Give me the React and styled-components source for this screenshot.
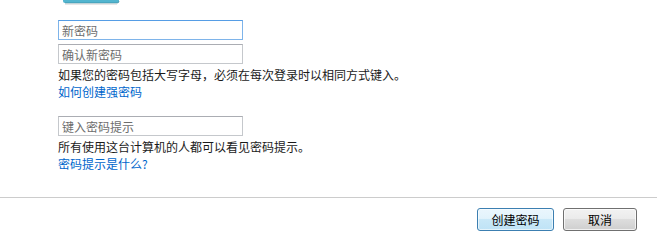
import React from "react";
import styled, { createGlobalStyle } from "styled-components";

const GlobalStyle = createGlobalStyle`
  html, body {
    margin: 0;
    padding: 0;
    background: #ffffff;
  }
  body {
    font-family: "Microsoft YaHei", "Noto Sans CJK SC", "Noto Sans", sans-serif;
    font-size: 12px;
    color: #000000;
  }
`;

const Page = styled.div`
  width: 657px;
  height: 240px;
  display: flex;
  flex-direction: column;
  overflow: hidden;
`;

const Content = styled.div`
  display: flex;
  flex-direction: column;
  align-items: flex-start;
  padding-left: 58px;
  flex: 1;
`;

const Picture = styled.div`
  height: 4px;
  margin-left: 4px;
  margin-bottom: 16px;
  line-height: 0;
`;

const Field = styled.input`
  box-sizing: border-box;
  width: 185px;
  height: 20px;
  margin: 0 0 ${(p) => p.$gap}px 0;
  padding: 0 3px;
  border: 1px solid ${(p) => (p.$focused ? "#7eb4ea" : "#c5c8cc")};
  border-top-color: ${(p) => (p.$focused ? "#569de5" : "#abadb3")};
  border-radius: 0;
  outline: none;
  background: #ffffff;
  font-family: inherit;
  font-size: 12px;
  color: #000000;

  &::placeholder {
    color: #6d6d6d;
    opacity: 1;
  }
`;

const Note = styled.div`
  line-height: 17px;
  margin-top: 2px;
  white-space: nowrap;
  color: #1a1a1a;
`;

const Link = styled.a`
  line-height: 17px;
  color: #0066cc;
  text-decoration: none;
  cursor: pointer;
  margin-bottom: ${(p) => p.$gap || 0}px;
`;

const Footer = styled.div`
  height: 43px;
  border-top: 1px solid #cccccc;
  display: flex;
  justify-content: flex-end;
  align-items: flex-start;
  gap: 9px;
  padding: 10px 20px 0 0;
  box-sizing: border-box;
`;

const Button = styled.button`
  box-sizing: border-box;
  width: ${(p) => p.$width}px;
  height: 23px;
  padding: 0;
  border-radius: 3px;
  font-family: inherit;
  font-size: 12px;
  color: #000000;
  border: 1px solid ${(p) => (p.$primary ? "#3c7fb1" : "#707070")};
  background: ${(p) =>
    p.$primary
      ? "linear-gradient(#eaf6fd 0%, #e2f3fc 45%, #c9e8f8 50%, #bfe3f6 100%)"
      : "linear-gradient(#f2f2f2 0%, #ebebeb 45%, #dddddd 50%, #cfcfcf 100%)"};
  box-shadow: inset 0 0 0 1px
    ${(p) => (p.$primary ? "rgba(255,255,255,0.6)" : "rgba(255,255,255,0.7)")};
`;

function PictureEdge() {
  return (
    <svg width="58" height="5" viewBox="0 0 58 5">
      <path d="M1 0 H57 V1 Q57 3 55 3 H3 Q1 3 1 1 Z" fill="#52b5cf" />
      <path d="M3 3 H55 Q57 3 57 1" fill="none" stroke="#3d8fa6" strokeWidth="0.8" />
      <rect x="3" y="3.6" width="52" height="1" fill="#d8d8d8" />
    </svg>
  );
}

export default function App() {
  return (
    <>
      <GlobalStyle />
      <Page>
        <Content>
          <Picture>
            <PictureEdge />
          </Picture>
          <Field $focused $gap={4} placeholder="新密码" />
          <Field $gap={0} placeholder="确认新密码" />
          <Note>如果您的密码包括大写字母，必须在每次登录时以相同方式键入。</Note>
          <Link $gap={16}>如何创建强密码</Link>
          <Field $gap={0} placeholder="键入密码提示" />
          <Note>所有使用这台计算机的人都可以看见密码提示。</Note>
          <Link>密码提示是什么?</Link>
        </Content>
        <Footer>
          <Button $primary $width={77}>创建密码</Button>
          <Button $width={74}>取消</Button>
        </Footer>
      </Page>
    </>
  );
}
